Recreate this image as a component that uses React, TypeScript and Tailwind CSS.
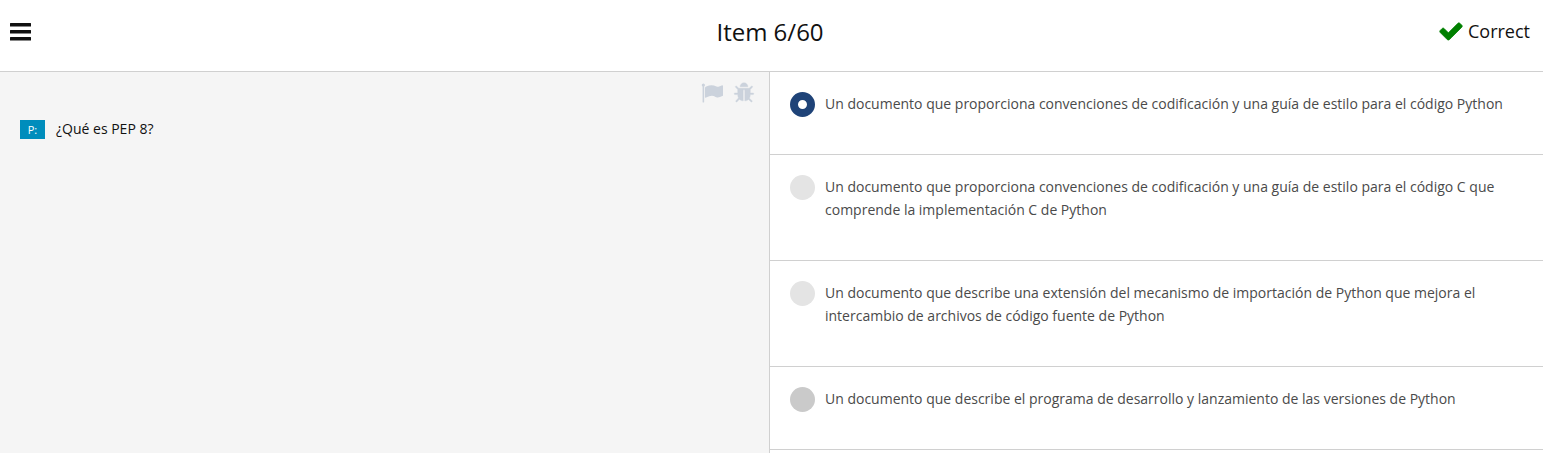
import { useState, type ReactNode } from "react";

const answers = [
  { text: "Un documento que proporciona convenciones de codificación y una guía de estilo para el código Python", tone: "bg-[#e4e4e4]" },
  { text: "Un documento que proporciona convenciones de codificación y una guía de estilo para el código C que comprende la implementación C de Python", tone: "bg-[#e4e4e4]" },
  { text: "Un documento que describe una extensión del mecanismo de importación de Python que mejora el intercambio de archivos de código fuente de Python", tone: "bg-[#e4e4e4]" },
  { text: "Un documento que describe el programa de desarrollo y lanzamiento de las versiones de Python", tone: "bg-[#cacaca]" },
];

function Icon({ className, children }: { className: string; children: ReactNode }) {
  return (
    <svg viewBox="0 0 1792 1792" fill="currentColor" aria-hidden="true" className={className}>
      {children}
    </svg>
  );
}

export default function App() {
  const [selected, setSelected] = useState(0);
  return (
    <div className="flex h-screen flex-col overflow-hidden bg-white font-['Open_Sans',sans-serif] text-[#111]">
      <header className="grid h-[72px] shrink-0 grid-cols-[1fr_auto_1fr] items-start border-b border-[#d0d0d0] pt-4 pr-[13px] pl-[10px]">
        <button type="button" aria-label="Menu" className="w-fit pt-[7px]">
          <svg viewBox="0 0 21 18" fill="currentColor" aria-hidden="true" className="h-[18px] w-[21px]">
            <rect width="21" height="3.5" rx=".2" />
            <rect y="7" width="21" height="3.5" rx=".2" />
            <rect y="14" width="21" height="3.5" rx=".2" />
          </svg>
        </button>
        <h1 className="text-2xl leading-8">Item 6/60</h1>
        <div className="flex items-center gap-1 justify-self-end text-lg leading-[30px]">
          <Icon className="size-[26px]">
            <path fill="#008000" stroke="#008000" strokeWidth="50" d="M1671 566q0 40-28 68l-724 724-136 136q-28 28-68 28t-68-28l-136-136-362-362q-28-28-28-68t28-68l136-136q28-28 68-28t68 28l294 295 656-657q28-28 68-28t68 28l136 136q28 28 28 68z" />
          </Icon>
          <span>Correct</span>
        </div>
      </header>
      <main className="grid min-h-0 flex-1 grid-cols-[minmax(0,770fr)_minmax(0,773fr)]">
        <section className="border-r border-[#d0d0d0] bg-[#f5f5f5] pt-[10px] pr-[14px] pl-5">
          <div className="flex justify-end gap-[10px] text-[#cbd2dc]">
            <button type="button" aria-label="Flag">
              <Icon className="size-[22px]">
                <path d="M320 256q0 72-64 110v1266q0 13-9.5 22.5t-22.5 9.5h-64q-13 0-22.5-9.5t-9.5-22.5v-1266q-64-38-64-110 0-53 37.5-90.5t90.5-37.5 90.5 37.5 37.5 90.5zm1472 64v763q0 25-12.5 38.5t-39.5 27.5q-215 116-369 116-61 0-123.5-22t-108.5-48-115.5-48-142.5-22q-192 0-464 146-17 9-33 9-26 0-45-19t-19-45v-742q0-32 31-55 21-14 79-43 236-120 421-120 107 0 200 29t219 88q38 19 88 19 54 0 117.5-21t110-47 88-47 54.5-21q26 0 45 19t19 45z" />
              </Icon>
            </button>
            <button type="button" aria-label="Report a bug">
              <Icon className="size-[22px]">
                <path stroke="currentColor" strokeWidth="30" d="M1696 960q0 26-19 45t-45 19h-224q0 171-67 290l208 209q19 19 19 45t-19 45q-18 19-45 19t-45-19l-198-197q-5 5-15 13t-42 28.5-65 36.5-82 29-97 13v-896h-128v896q-51 0-101.5-13.5t-87-33-66-39-43.5-32.5l-15-14-183 207q-20 21-48 21-24 0-43-16-19-18-20.5-44.5t15.5-46.5l202-227q-58-114-58-274h-224q-26 0-45-19t-19-45 19-45 45-19h224v-294l-173-173q-19-19-19-45t19-45 45-19 45 19l173 173h844l173-173q19-19 45-19t45 19 19 45-19 45l-173 173v294h224q26 0 45 19t19 45zm-480-576h-640q0-133 93.5-226.5t226.5-93.5 226.5 93.5 93.5 226.5z" />
              </Icon>
            </button>
          </div>
          <div className="mt-[15px] flex items-center gap-[11px] text-sm">
            <span className="w-[25px] bg-[#008dbc] text-center text-[11px] leading-[19px] text-white">P:</span>
            <p>¿Qué es PEP 8?</p>
          </div>
        </section>
        <section>
          {answers.map(({ text, tone }, i) => (
            <label key={text} className="flex cursor-pointer items-start gap-[10px] border-b border-[#d0d0d0] px-5 pt-5 text-sm leading-[23px] text-[#4a4a4a]">
              <input
                type="radio"
                name="answer"
                checked={selected === i}
                onChange={() => setSelected(i)}
                className={`size-[25px] shrink-0 appearance-none rounded-full ${tone} checked:border-[8px] checked:border-[#1f4378] checked:bg-white`}
              />
              <span className="pb-[39px]">{text}</span>
            </label>
          ))}
        </section>
      </main>
    </div>
  );
}
